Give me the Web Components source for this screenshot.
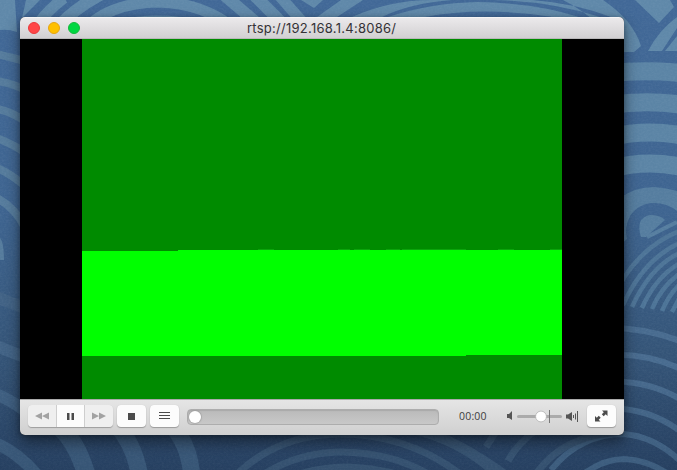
<!DOCTYPE html>
<html lang="en"><head><meta charset="utf-8"><title>rtsp://192.168.1.4:8086/</title>
<style>html,body{margin:0;width:677px;height:470px;overflow:hidden}</style></head><body>
<wave-desktop><player-window><title-bar>rtsp://192.168.1.4:8086/</title-bar><video-view></video-view><control-bar></control-bar></player-window></wave-desktop>
<script>
const define=(name,markup)=>customElements.define(name,class extends HTMLElement{
  constructor(){super();this.attachShadow({mode:'open'}).innerHTML=markup;}
});

define('wave-desktop',`<style>
:host{display:grid;width:677px;height:470px;box-sizing:border-box;padding:17px 53px 35px 20px;position:relative;overflow:hidden}
.bg{position:absolute;inset:0}
slot{display:contents}
</style>
<svg class="bg" width="677" height="470" viewBox="0 0 677 470" fill="none">
<defs>
<linearGradient id="base" x2="0" y2="1"><stop stop-color="#416897"/><stop offset=".45" stop-color="#3e6490"/><stop offset=".75" stop-color="#345477"/><stop offset="1" stop-color="#2c476b"/></linearGradient>
<linearGradient id="edge" x2="0" y2="1"><stop stop-color="#10253b" stop-opacity="0"/><stop offset="1" stop-color="#10253b" stop-opacity=".22"/></linearGradient>
<filter id="weave" x="0" y="0" width="100%" height="100%"><feTurbulence type="fractalNoise" baseFrequency=".45 .6" numOctaves="2" seed="4"/><feColorMatrix values="0 0 0 0 .65  0 0 0 0 .75  0 0 0 0 .85  .5 .5 0 0 -.38"/></filter>
<clipPath id="top"><rect width="677" height="52"/></clipPath>
</defs>
<rect width="677" height="470" fill="url(#base)"/>
<g clip-path="url(#top)">
<path fill="#5f88a9" d="M0 0H15L17 32Q8 29 0 30ZM26 0H40L22 18Z"/>
<g stroke="#5f88a9"><path stroke-width="11" d="M34 30Q46 11 64-2"/><path stroke-width="12" d="M55 30Q72 10 100-5"/><path stroke-width="11" d="M84 30Q109 3 158 2Q204 3 236 30"/><path stroke-width="6" d="M112 24Q158 13 204 24"/><path stroke-width="12" d="M224-5L258 24"/><path stroke-width="12" d="M251-8L285 26"/><path stroke-width="11" d="M276-8L306 26"/></g>
<path fill="#5f88a9" d="M301 0H323L314 8ZM317 17L341 0H363L337 17ZM352 17Q391 0 430 0H452Q411 3 382 17ZM388 17Q430 3 478 2Q535 3 579 17H553Q482 6 425 17ZM492 0Q549 1 600 17H611Q574 3 532 0ZM563 0H603Q633 20 641 46L634 52H618Q601 19 563 0ZM635 0H670L674 7L659 23ZM648 51Q659 30 677 17V28L662 51ZM665 51L677 36V51Z"/>
</g>
<g stroke="#5b84a5" stroke-width="18"><path d="M610 73Q650 69 690 74"/><path d="M610 105Q650 99 690 106"/><path d="M610 137Q650 128 690 137"/><path d="M610 169Q650 158 690 169"/></g>
<path fill="#557d9f" d="M620 198Q635 187 654 187Q667 188 677 191V211Q667 203 654 203Q639 203 630 216Q624 228 627 239L620 245Z"/>
<path fill="#557d9f" d="M641 237Q635 218 650 215Q660 215 665 220L646 237Z"/>
<g stroke="#557d9f" stroke-width="4"><path d="M647 237L677 222"/></g>
<g stroke="#4d7497" stroke-width="4.5"><path d="M619 286Q641 246 682 230"/><path d="M623 305Q644 258 682 242"/><path d="M632 307Q651 265 682 252"/><path d="M642 308Q656 276 682 262"/><path d="M652 309Q662 285 682 272"/><path d="M662 311Q669 294 682 282"/><path d="M672 312L682 293"/></g>
<g stroke="#486b8f" stroke-width="6"><path d="M610 328Q650 328 687 344"/><path d="M610 355Q650 353 687 372"/><path d="M610 382Q650 380 687 403"/><path d="M610 409Q650 407 687 436"/><path d="M551 470Q580 434 624 434Q659 437 687 468"/><path d="M578 478Q602 459 624 459Q650 460 674 478"/></g>
<g stroke="#557b9c" stroke-width="8"><path d="M-3 54L25 61"/><path d="M-3 81Q12 83 25 90"/><path d="M-3 109Q10 111 25 121"/><path d="M-3 138Q10 143 25 152"/><path d="M-3 168Q10 173 25 186"/><path d="M-3 198Q15 208 24 226"/><path d="M-4 239Q0 243 0 260"/></g>
<g stroke="#416285" stroke-width="12"><path d="M-4 297L27 309"/><path d="M-4 346L27 358"/><path d="M-4 394Q13 401 28 413"/><path d="M-5 443Q20 453 42 481"/><path stroke-width="18" d="M58 425Q78 443 87 477"/><path stroke-width="17" d="M116 425Q134 443 140 477"/><path stroke-width="17" d="M171 425Q189 443 192 477"/></g>
<g stroke="#3e5c7d" stroke-width="7"><path d="M235 476Q278 434 340 434Q408 434 463 476"/><path d="M258 478Q296 452 343 452Q396 453 435 478"/><path d="M289 478Q315 467 347 467Q380 468 410 478"/><path d="M486 447L497 430M508 461Q517 444 535 431"/><path d="M397 427Q458 438 496 475M425 431Q459 440 507 475"/><path d="M532 480Q560 434 623 432"/></g>
<rect width="677" height="470" filter="url(#weave)" opacity=".16"/>
<rect y="365" width="677" height="105" fill="url(#edge)"/>
</svg><slot></slot>`);

define('player-window',`<style>
:host{display:flex;flex-direction:column;width:604px;height:418px;position:relative;border-radius:5px;overflow:hidden;background:#000}
:host{box-shadow:0 7px 15px #0007,0 1px 5px #0004}
</style><slot></slot>`);

define('title-bar',`<style>
:host{display:grid;grid-template-columns:1fr auto 1fr;align-items:center;height:22px;box-sizing:border-box;background:linear-gradient(#ebe9eb,#d2d0d2);border-top:1px solid #f5f4f5;border-bottom:1px solid #bab8ba;font:13px Inter,"Liberation Sans",sans-serif;letter-spacing:.26px;color:#343236}
.lights{display:flex;gap:8px;padding-left:8px}
i{width:12px;height:12px;box-sizing:border-box;border-radius:50%;background:#ff4648;border:1px solid #e8393c}
i:nth-child(2){background:#ffc000;border-color:#e5a413}i:nth-child(3){background:#00d742;border-color:#14b83d}
.title{width:150px;white-space:nowrap;line-height:20px}
</style><div class="lights"><i></i><i></i><i></i></div><div class="title"><slot></slot></div><span></span>`);

define('video-view',`<style>
:host{display:flex;justify-content:center;height:360px;background:#000;flex:none}svg{display:block}
</style><svg width="480" height="360" viewBox="0 0 480 360" shape-rendering="crispEdges"><path fill="#008b00" d="M0 0H480V360H0Z"/><path fill="#0f0" d="M0 212H96V211H480V316H384V317H0Z"/><path fill="#0ba50b" d="M176 210h16v1h-16zM256 210h12v1h-12zM272 210h16v1h-16zM304 210h14v1h-14zM320 210h32v1h-32zM352 210h32v1h-32zM416 210h16v1h-16zM468 210h12v1h-12z"/></svg>`);

define('tool-button',`<style>
:host{display:grid;place-items:center;width:29px;height:22px;box-sizing:border-box;border-radius:4px;background:#fcfcfc;box-shadow:0 1px 1px #0004,0 0 1px #0002;color:#4b4b4b}
:host([group]){border-radius:0;width:27px;box-shadow:none}
:host([dim]){width:28px;background:#efefef;color:#a2a2a2}
</style><slot></slot>`);

define('seek-slider',`<style>
:host{display:flex;align-items:center;width:252px;height:16px;box-sizing:border-box;border:1px solid #adadad;border-radius:4px;background:linear-gradient(#bababa,#c8c8c8);box-shadow:inset 0 1px 1px #aaa}
i{width:12px;height:12px;margin-left:1px;border-radius:50%;background:#fff;box-shadow:0 0 1px 1px #9999}
</style><i></i>`);

define('volume-control',`<style>:host{display:block;width:72px;height:16px}svg{display:block}</style>
<svg width="72" height="16" fill="#555"><path d="M1 6H3L6 3V12L3 10H1Z"/><rect x="11" y="7" width="45" height="3" rx="1.5" fill="#ababab"/><rect x="43" y="2" width="1" height="13" fill="#777"/><circle cx="35" cy="8.5" r="5.4" fill="#fff" stroke="#aaa" stroke-width=".7"/><path d="M60 6.5H62L66 4V13L62 10.5H60Z"/><path d="M67.5 7V10M69.5 5.5V11.5M71.5 3V14" fill="none" stroke="#555"/></svg>`);

define('control-bar',`<style>
:host{display:flex;height:36px;box-sizing:border-box;border-top:1px solid #aaa;padding:5px 8px 0;background:linear-gradient(#e5e5e5,#d0d0d0);align-items:flex-start}
.group{display:flex;gap:1px;width:85px;border-radius:4px;overflow:hidden;box-shadow:0 1px 1px #0004;background:#cecece}
.stop,.list{margin-left:4px}
seek-slider{margin:4px 0 0 8px}
time{margin:4px 0 0 20px;width:47px;font:10.5px/14px "Open Sans","Noto Sans",sans-serif;letter-spacing:.2px;color:#3d3d3d}
volume-control{margin-top:3px}
.full{margin-left:auto}
svg{display:block}
</style>
<div class="group"><tool-button group dim><svg width="14" height="8" fill="currentColor"><path d="M0 4L7 .5V7.5ZM7 4L14 .5V7.5Z"/></svg></tool-button><tool-button group><svg width="7" height="7" fill="currentColor"><path d="M0 0H2.5V7H0ZM4.5 0H7V7H4.5Z"/></svg></tool-button><tool-button group dim><svg width="14" height="8" fill="currentColor"><path d="M0 .5L7 4L0 7.5ZM7 .5L14 4L7 7.5Z"/></svg></tool-button></div>
<tool-button class="stop"><svg width="7" height="7"><path fill="#4b4b4b" d="M0 0H7V7H0Z"/></svg></tool-button>
<tool-button class="list"><svg width="11" height="8"><path d="M0 .5H11M0 3.5H11M0 6.5H11" stroke="#4b4b4b"/></svg></tool-button>
<seek-slider></seek-slider><time>00:00</time><volume-control></volume-control>
<tool-button class="full"><svg width="13" height="12" fill="#4b4b4b"><path d="M7 .5H12.5V6L10.7 4.3L8.7 6.2L6.8 4.3L8.8 2.3ZM0 6L1.8 7.7L3.8 5.8L5.7 7.7L3.7 9.7L5.5 11.5H0Z"/></svg></tool-button>`);
</script></body></html>
